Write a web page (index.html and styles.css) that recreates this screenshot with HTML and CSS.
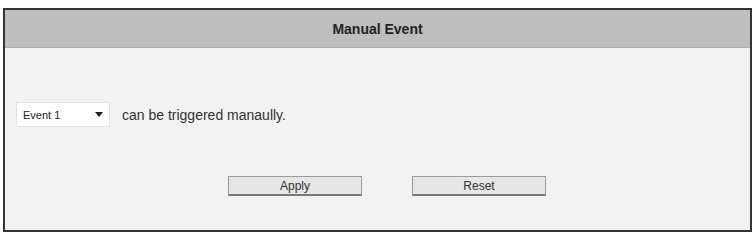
FILE: index.html
```html
<!DOCTYPE html>
<html lang="en">
<head>
    <meta charset="UTF-8">
    <title>Manual Event</title>
    <link rel="stylesheet" href="styles.css">
</head>
<body>
    <div class="panel">
        <div class="panel-header">Manual Event</div>
        <div class="panel-body">
            <div class="event-row">
                <div class="select">
                    <span>Event 1</span>
                    <span class="caret"></span>
                </div>
                <span class="label">can be triggered manaully.</span>
            </div>
            <div class="button-row">
                <button class="btn">Apply</button>
                <button class="btn">Reset</button>
            </div>
        </div>
    </div>
</body>
</html>
```

FILE: styles.css
```css
* {
    margin: 0;
    padding: 0;
    box-sizing: border-box;
}

body {
    font-family: "Liberation Sans", Arial, sans-serif;
    background: #fff;
    color: #333;
    width: 754px;
    height: 234px;
    overflow: hidden;
}

.panel {
    margin: 8px 2px 0 3px;
    height: 224px;
    border: 2px solid #333;
    background: #f2f2f2;
    display: flex;
    flex-direction: column;
}

.panel-header {
    height: 38px;
    background: #bebebe;
    border-bottom: 1px solid #b0b0b0;
    display: flex;
    align-items: center;
    justify-content: center;
    font-size: 14px;
    font-weight: bold;
    color: #222;
}

.panel-body {
    flex: 1;
    padding: 0 0 0 11px;
}

.event-row {
    display: flex;
    align-items: center;
    margin-top: 54px;
    gap: 12px;
}

.select {
    width: 94px;
    height: 25px;
    background: #fff;
    border: 1px solid #e2e2e2;
    display: flex;
    align-items: center;
    justify-content: space-between;
    padding: 0 6px 0 6px;
    font-size: 11px;
    color: #222;
}

.caret {
    width: 0;
    height: 0;
    border-left: 4px solid transparent;
    border-right: 4px solid transparent;
    border-top: 5px solid #222;
}

.label {
    font-size: 14px;
    color: #333;
}

.button-row {
    display: flex;
    gap: 50px;
    margin: 49px 0 0 212px;
}

.btn {
    width: 134px;
    height: 20px;
    background: #e6e6e6;
    border: 1px solid #9a9a9a;
    border-bottom: 2px solid #7a7a7a;
    font-family: inherit;
    font-size: 12px;
    color: #333;
}
```
